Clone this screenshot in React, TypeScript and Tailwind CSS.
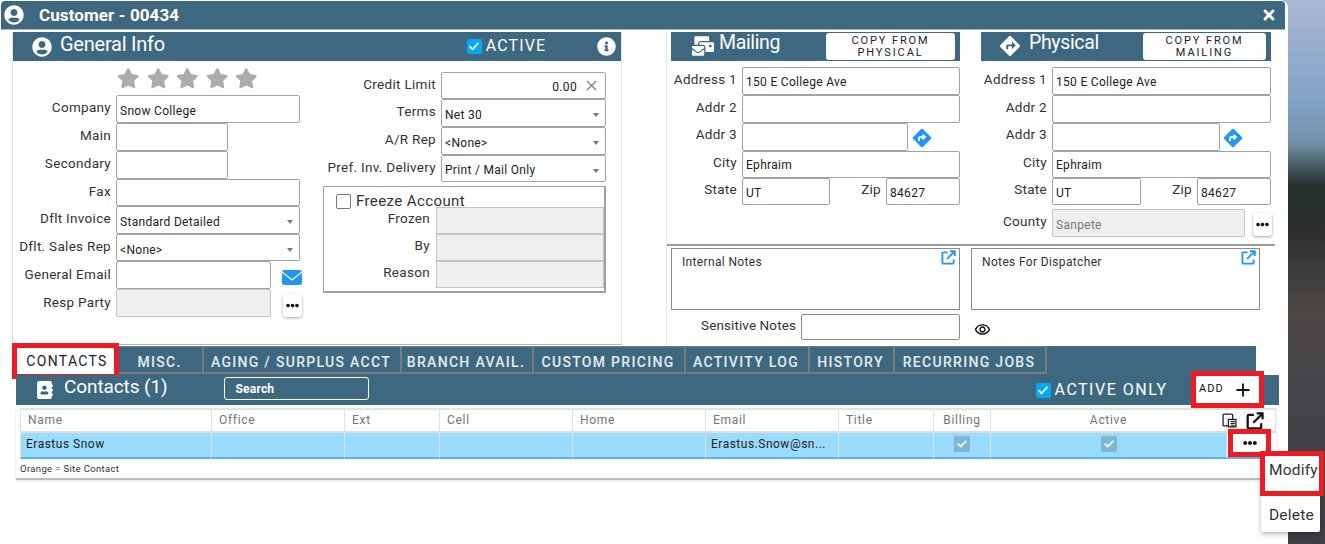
import React from "react";
import { FaUserCircle, FaInfoCircle, FaStar, FaMailBulk, FaDirections, FaAddressBook, FaEllipsisH, FaTimes, FaCheck } from "react-icons/fa";
import { MdOutlineRemoveRedEye } from "react-icons/md";
import { X, Plus } from "lucide-react";

const Ctl = ({ w, v, sel, dis, tp = 4 }: { w: number; v?: string; sel?: boolean; dis?: boolean; tp?: number }) => (
  <div
    style={{ width: w, paddingTop: tp }}
    className={`h-full shrink-0 flex items-center pl-[3px] border border-[#a3a3a3] rounded-[2px] text-[12px] tracking-[0.3px] relative ${dis ? "bg-[#efefef] text-[#777] border-[#c4c4c4]" : "bg-white text-[#222]"}`}
  >
    {v}
    {sel && <span className="absolute right-[6px] top-[13px] border-x-[3.5px] border-t-[4px] border-x-transparent border-t-[#777]" />}
  </div>
);

const Field = ({ label, lw, h = 28, up = 4, children }: { label: string; lw: number; h?: number; up?: number; children: React.ReactNode }) => (
  <div className="flex" style={{ height: h }}>
    <div style={{ width: lw, paddingBottom: up }} className="shrink-0 text-right pr-[5px] flex items-center justify-end text-[13.5px] tracking-[0.3px] text-[#333] whitespace-nowrap">
      {label}
    </div>
    {children}
  </div>
);

const Dots = () => (
  <div className="w-[19px] h-[23px] bg-white rounded-[3px] shadow-[0_1px_3px_rgba(0,0,0,0.35)] flex items-center justify-center">
    <FaEllipsisH className="text-[#111] text-[13px]" />
  </div>
);

const Redir = () => (
  <svg width="20" height="20" viewBox="0 0 20 20">
    <rect x="3" y="3" width="14" height="14" rx="1.5" transform="rotate(45 10 10)" fill="#2196f3" />
    <path d="M7 13v-2.5a1.5 1.5 0 0 1 1.5-1.5H12M10.5 6.8 13 9l-2.5 2.2" stroke="#fff" strokeWidth="1.8" fill="none" />
  </svg>
);

const ExtLink = ({ color, size, sw = 2 }: { color: string; size: number; sw?: number }) => (
  <svg width={size} height={size} viewBox="0 0 16 16" fill="none" stroke={color} strokeWidth={sw}>
    <path d="M7 2.5H2.5a1 1 0 0 0-1 1v10a1 1 0 0 0 1 1h10a1 1 0 0 0 1-1V10" />
    <path d="M6.5 9.5 14 2M9.5 1.3H14.7V6.5" />
  </svg>
);

const AddressCol = ({ title, icon, copy, w, btnW, last, zipLeft }: { title: string; icon: React.ReactNode; copy: string[]; w: number; btnW: number; last?: boolean; zipLeft: number }) => (
  <div style={{ width: w }} className="shrink-0">
    <div className="h-[29px] bg-[#3d6880] flex items-center relative text-white">
      <div className="w-[45px] flex justify-end pr-[2px] pb-[1px]">{icon}</div>
      <span className="text-[19.5px] ml-[3px] pb-[7px] tracking-[-0.35px]">{title}</span>
      <div style={{ width: btnW }} className="absolute right-[5px] top-[1px] h-[27px] bg-white rounded-[3px] text-[#222] text-[11px] leading-[12px] tracking-[1.9px] text-center pt-[2px]">
        {copy[0]}
        <br />
        {copy[1]}
      </div>
    </div>
    <div className="mt-[6px]">
      <Field label="Address 1" lw={71}><Ctl w={w - 71} v="150 E College Ave" tp={2} /></Field>
      <Field label="Addr 2" lw={71}><Ctl w={w - 71} /></Field>
      <Field label="Addr 3" lw={71} up={5}>
        <Ctl w={last ? 168 : 166} />
        <div className={`${last ? "ml-[3px]" : "ml-[4px]"} pt-[5px]`}><Redir /></div>
      </Field>
      <Field label="City" lw={71} h={27}><Ctl w={w - 71} v="Ephraim" tp={0} /></Field>
      <div className="flex h-[27px]">
        <Field label="State" lw={71} h={27}><Ctl w={last ? 89 : 88} v="UT" tp={2} /></Field>
        <div style={{ width: zipLeft }} className="text-right pr-[5px] pb-[4px] flex items-center justify-end text-[13.5px] tracking-[0.3px] text-[#333]">Zip</div>
        <Ctl w={w - 71 - (last ? 89 : 88) - zipLeft} v="84627" tp={2} />
      </div>
      {last && (
        <div className="mt-[4px]">
          <Field label="County" lw={71}>
            <Ctl w={193} v="Sanpete" dis />
            <div className="ml-[8px] mt-[4px]"><Dots /></div>
          </Field>
        </div>
      )}
    </div>
  </div>
);

const NoteBox = ({ text, w }: { text: string; w: number }) => (
  <div style={{ width: w }} className="h-[62px] border border-[#8a8a8a] bg-white relative pl-[10px] pt-[4px] text-[12px] tracking-[0.35px] text-[#333]">
    {text}
    <div className="absolute right-[3px] top-[1px]"><ExtLink color="#2196f3" size={15} /></div>
  </div>
);

const RedBox = ({ cls }: { cls: string }) => <div className={`absolute border-[5px] border-[#ed1c24] pointer-events-none ${cls}`} />;

const tabs = [
  ["MISC.", 85],
  ["AGING / SURPLUS ACCT", 198],
  ["BRANCH AVAIL.", 132],
  ["CUSTOM PRICING", 152],
  ["ACTIVITY LOG", 124],
  ["HISTORY", 85],
  ["RECURRING JOBS", 152],
] as const;

const cols: [string, string][] = [
  ["Name", "left"],
  ["Office", "left"],
  ["Ext", "left"],
  ["Cell", "left"],
  ["Home", "left"],
  ["Email", "left"],
  ["Title", "left"],
  ["Billing", "center"],
  ["Active", "center"],
];

const Chk = () => (
  <div className="w-[16px] h-[16px] rounded-[2px] bg-[#80b6d1] flex items-center justify-center">
    <FaCheck className="text-[#e8f4fa] text-[10px]" />
  </div>
);

const BlueChk = ({ s = 15 }: { s?: number }) => (
  <div style={{ width: s, height: s }} className="rounded-[2px] bg-[#03a9f4] flex items-center justify-center shrink-0">
    <svg width={s - 3} height={s - 3} viewBox="0 0 12 12" fill="none" stroke="#fff" strokeWidth="1.7"><path d="M1.5 6.2 4.6 9.3 10.5 2.8" /></svg>
  </div>
);

export default function App() {
  return (
    <div
      className="relative w-[1325px] h-[544px] overflow-hidden bg-[linear-gradient(180deg,#aab8d2_0%,#83a3c8_18%,#7593ad_26%,#26302f_34%,#2c2f2e_42%,#4d4846_58%,#44434a_75%,#3e3e44_100%)]"
      style={{ fontFamily: "Roboto, 'Liberation Sans', sans-serif" }}
    >
      <div className="w-[1288px] h-[544px] bg-white rounded-tr-[8px] pl-[1px] pt-[1px]">
        {/* Title bar */}
        <div className="w-[1284px] h-[28px] bg-[#3d6880] rounded-t-[4px] border-b border-[#9fb4c0] flex items-center text-white box-content">
          <FaUserCircle className="text-[20px] ml-[3px]" />
          <span className="ml-[15px] text-[17px] font-bold tracking-[0.1px] pt-[2px]">Customer - 00434</span>
          <FaTimes className="ml-auto mr-[8px] text-[16px]" />
        </div>

        {/* Upper form */}
        <div className="flex h-[314px] mt-[2px]">
          <div className="w-[610px] ml-[11px] h-[313px] border-b border-x border-[#e4e4e4] border-b-[#b5b5b5] shrink-0">
            <div className="h-[29px] bg-[#3d6880] flex items-center text-white">
              <FaUserCircle className="text-[20px] ml-[19px]" />
              <span className="ml-[8px] text-[20px] pb-[6px] tracking-[-0.25px]">General Info</span>
              <div className="ml-[302px] mb-[1px]"><BlueChk /></div>
              <span className="ml-[4px] text-[16px] tracking-[1.1px] mb-[1px]">ACTIVE</span>
              <FaInfoCircle className="ml-auto mr-[5px] text-[19px]" />
            </div>
            <div className="flex">
              <div className="w-[310px] shrink-0">
                <div className="h-[34px] pl-[104px] pt-[6px] flex gap-[7px] text-[#acacac]">
                  {[0, 1, 2, 3, 4].map((i) => <FaStar key={i} className="text-[22.5px]" />)}
                </div>
                <Field label="Company" lw={103}><Ctl w={184} v="Snow College" /></Field>
                <Field label="Main" lw={103}><Ctl w={112} /></Field>
                <Field label="Secondary" lw={103}><Ctl w={112} /></Field>
                <Field label="Fax" lw={103} h={27} up={3}><Ctl w={184} /></Field>
                <Field label="Dflt Invoice" lw={103}><Ctl w={184} v="Standard Detailed" sel /></Field>
                <Field label="Dflt. Sales Rep" lw={103} h={27} up={2}><Ctl w={184} v="<None>" sel /></Field>
                <Field label="General Email" lw={103} up={2}>
                  <Ctl w={155} />
                  <div className="ml-[11px] mt-[9px] w-[20px] h-[15px] rounded-[2px] bg-[#2196f3]">
                    <svg width="20" height="15" viewBox="0 0 20 15" fill="none" stroke="#fff" strokeWidth="1.2"><path d="M0 2 10 10 20 2" /></svg>
                  </div>
                </Field>
                <Field label="Resp Party" lw={103} up={2}>
                  <Ctl w={155} dis />
                  <div className="ml-[12px] mt-[5px]"><Dots /></div>
                </Field>
              </div>
              <div className="pt-[11px]">
                <Field label="Credit Limit" lw={118} h={27} up={3}>
                  <div className="w-[165px] h-full border border-[#a3a3a3] rounded-[2px] flex items-center justify-end text-[12px] tracking-[0.35px] text-[#222] pt-[3px]">
                    0.00
                    <X className="w-[17px] h-[17px] text-[#777] ml-[6px] mr-[5px] mb-[3px]" strokeWidth={1.5} />
                  </div>
                </Field>
                <Field label="Terms" lw={118}><Ctl w={165} v="Net 30" sel /></Field>
                <Field label="A/R Rep" lw={118}><Ctl w={165} v="<None>" sel /></Field>
                <Field label="Pref. Inv. Delivery" lw={118} h={27} up={3}><Ctl w={165} v="Print / Mail Only" sel tp={3} /></Field>
                <div className="w-[283px] h-[107px] mt-[4px] border border-[#a0a0a0] border-b-2 border-r-2 relative">
                  <div className="flex items-center h-[20px] pl-[12px] pt-[9px]">
                    <div className="w-[15px] h-[15px] border border-[#777] rounded-[2px] bg-white" />
                    <span className="ml-[5px] text-[15px] tracking-[0.4px] text-[#333]">Freeze Account</span>
                  </div>
                  {["Frozen", "By", "Reason"].map((l) => (
                    <div key={l} className="flex h-[27px]">
                      <div className="w-[112px] pr-[6px] pb-[5px] text-right flex items-center justify-end text-[13.5px] tracking-[0.3px] text-[#333]">{l}</div>
                      <div className="w-[168px] bg-[#efefef] border border-[#c4c4c4]" />
                    </div>
                  ))}
                </div>
              </div>
            </div>
          </div>

          <div className="w-[609px] ml-[44px] border-l border-[#e4e4e4] shrink-0 h-[314px]">
            <div className="flex gap-[21px] pl-[4px] h-[212px] border-b-2 border-[#9a9a9a] box-content">
              <AddressCol title="Mailing" icon={<FaMailBulk className="text-[22px]" />} copy={["COPY FROM", "PHYSICAL"]} w={289} btnW={129} zipLeft={56} />
              <AddressCol title="Physical" icon={<FaDirections className="text-[20px] mr-[4px]" />} copy={["COPY FROM", "MAILING"]} w={290} btnW={123} last zipLeft={56} />
            </div>
            <div className="flex gap-[11px] pl-[4px] mt-[2px]">
              <NoteBox text="Internal Notes" w={289} />
              <NoteBox text="Notes For Dispatcher" w={289} />
            </div>
            <div className="flex items-center pl-[4px] mt-[4px] h-[26px]">
              <div className="w-[130px] text-right pr-[5px] pb-[3px] text-[13.5px] tracking-[0.1px] text-[#333]">Sensitive Notes</div>
              <div className="w-[159px] h-full border border-[#8a8a8a] rounded-[2px]" />
              <MdOutlineRemoveRedEye className="ml-[14px] mt-[5px] text-[17px] text-[#111]" />
            </div>
          </div>
        </div>

        {/* Tabs */}
        <div className="ml-[14px] w-[1241px] h-[29px] bg-[#3d6880] flex relative">
          <div className="w-[104px] h-[28px] bg-white relative flex items-center justify-center pt-[2px] text-[14px] tracking-[1.3px] text-[#222]">
            CONTACTS
            <RedBox cls="-left-[3px] -top-[3px] w-[107px] h-[36px] border-[5px]" />
          </div>
          {tabs.map(([t, w]) => (
            <div key={t} style={{ width: w }} className="h-[28px] shrink-0 pt-[6px] pr-[2px] border-t border-r-2 border-b-2 border-[#7b7b7b] flex items-center justify-center text-[14px] font-medium tracking-[1.3px] text-[#e6edf1] whitespace-nowrap">
              {t}
            </div>
          ))}
        </div>

        {/* Contacts header */}
        <div className="ml-[15px] w-[1263px] h-[30px] bg-[#3d6880] flex items-center text-white relative">
          <FaAddressBook className="text-[18px] ml-[20px] mb-[1px]" />
          <span className="ml-[10px] text-[19px] pb-[6px] tracking-[-0.1px]">Contacts (1)</span>
          <div className="ml-[56px] w-[145px] h-[23px] border border-white rounded-[3px] flex items-center pl-[11px] text-[12px] font-bold tracking-[0.2px] mb-[3px]">Search</div>
          <div className="ml-[667px]"><BlueChk /></div>
          <span className="ml-[4px] text-[16px] tracking-[1.5px]">ACTIVE ONLY</span>
          <div className="absolute left-[1175px] -top-[4px] w-[73px] h-[37px] bg-white border-[5px] border-[#ed1c24] flex items-center text-[#111]">
            <span className="text-[11px] tracking-[1px] ml-[3px]">ADD</span>
            <Plus className="w-[20px] h-[20px] ml-[9px]" strokeWidth={2.2} />
          </div>
        </div>

        {/* Table card */}
        <div className="ml-[15px] w-[1260px] h-[72px] mt-[3px] pl-[4px] bg-white border-b-2 border-[#bcbcbc] shadow-[0_1px_3px_rgba(0,0,0,0.12)]">
          <div className="grid grid-cols-[191px_133px_95px_133px_133px_133px_95px_57px_236px_49px] border-t-2 border-x border-[#e2e2e2]">
            {cols.map(([c, a]) => (
              <div key={c} className={`h-[23px] pb-[1px] border-r border-[#e2e2e2] border-b-2 border-b-[#dedede] flex items-center text-[12px] tracking-[0.7px] text-[#757575] ${a === "center" ? "justify-center" : "pl-[7px]"}`}>
                {c}
              </div>
            ))}
            <div className="h-[23px] border-b-2 border-[#dedede] flex items-center -ml-[5px] gap-[9px] relative">
              <svg width="15" height="15" viewBox="0 0 14 14" fill="none" stroke="#222" strokeWidth="1.2">
                <rect x="1" y="1" width="9" height="11" rx="1" />
                <rect x="6" y="6" width="7" height="7" fill="#fff" />
                <path d="M8 8h4M8 10h4M8 12h4" />
              </svg>
              <ExtLink color="#111" size={18} />
            </div>
            {cols.map(([c], i) => (
              <div key={c} className="h-[26px] pb-[2px] bg-[#99dbfd] border-r border-[#e2e2e2] border-b-2 border-b-[#55b6ef] flex items-center justify-start text-[12px] tracking-[0.5px] text-[#222]">
                {c === "Name" && <span className="pl-[5px]">Erastus Snow</span>}
                {c === "Email" && <span className="pl-[5px]">Erastus.Snow@sn...</span>}
                {i > 6 && <div className="w-full flex justify-center"><Chk /></div>}
              </div>
            ))}
            <div className="h-[26px] bg-white border-b-2 border-[#55b6ef] relative">
              <div className="absolute left-[1px] -top-[4px] w-[43px] h-[28px] border-[5px] border-[#ed1c24] bg-white flex items-center justify-center">
                <FaEllipsisH className="text-[#111] text-[14px]" />
              </div>
            </div>
          </div>
          <div className="text-[9.5px] tracking-[0.35px] text-[#333] mt-[3px]">Orange = Site Contact</div>
        </div>
      </div>

      {/* Dropdown */}
      <div className="absolute left-[1261px] top-[452px] w-[59px] h-[80px] bg-white rounded-[2px] shadow-[0_2px_5px_rgba(0,0,0,0.3)] text-[15.5px] tracking-[0.2px] text-[#333]">
        <div className="h-[44px] pb-[6px] flex items-center pl-[8px]">Modify</div>
        <div className="h-[36px] pt-[4px] flex items-center pl-[8px]">Delete</div>
      </div>
      <RedBox cls="left-[1260px] top-[451px] w-[64px] h-[45px] border-[5px]" />
    </div>
  );
}
